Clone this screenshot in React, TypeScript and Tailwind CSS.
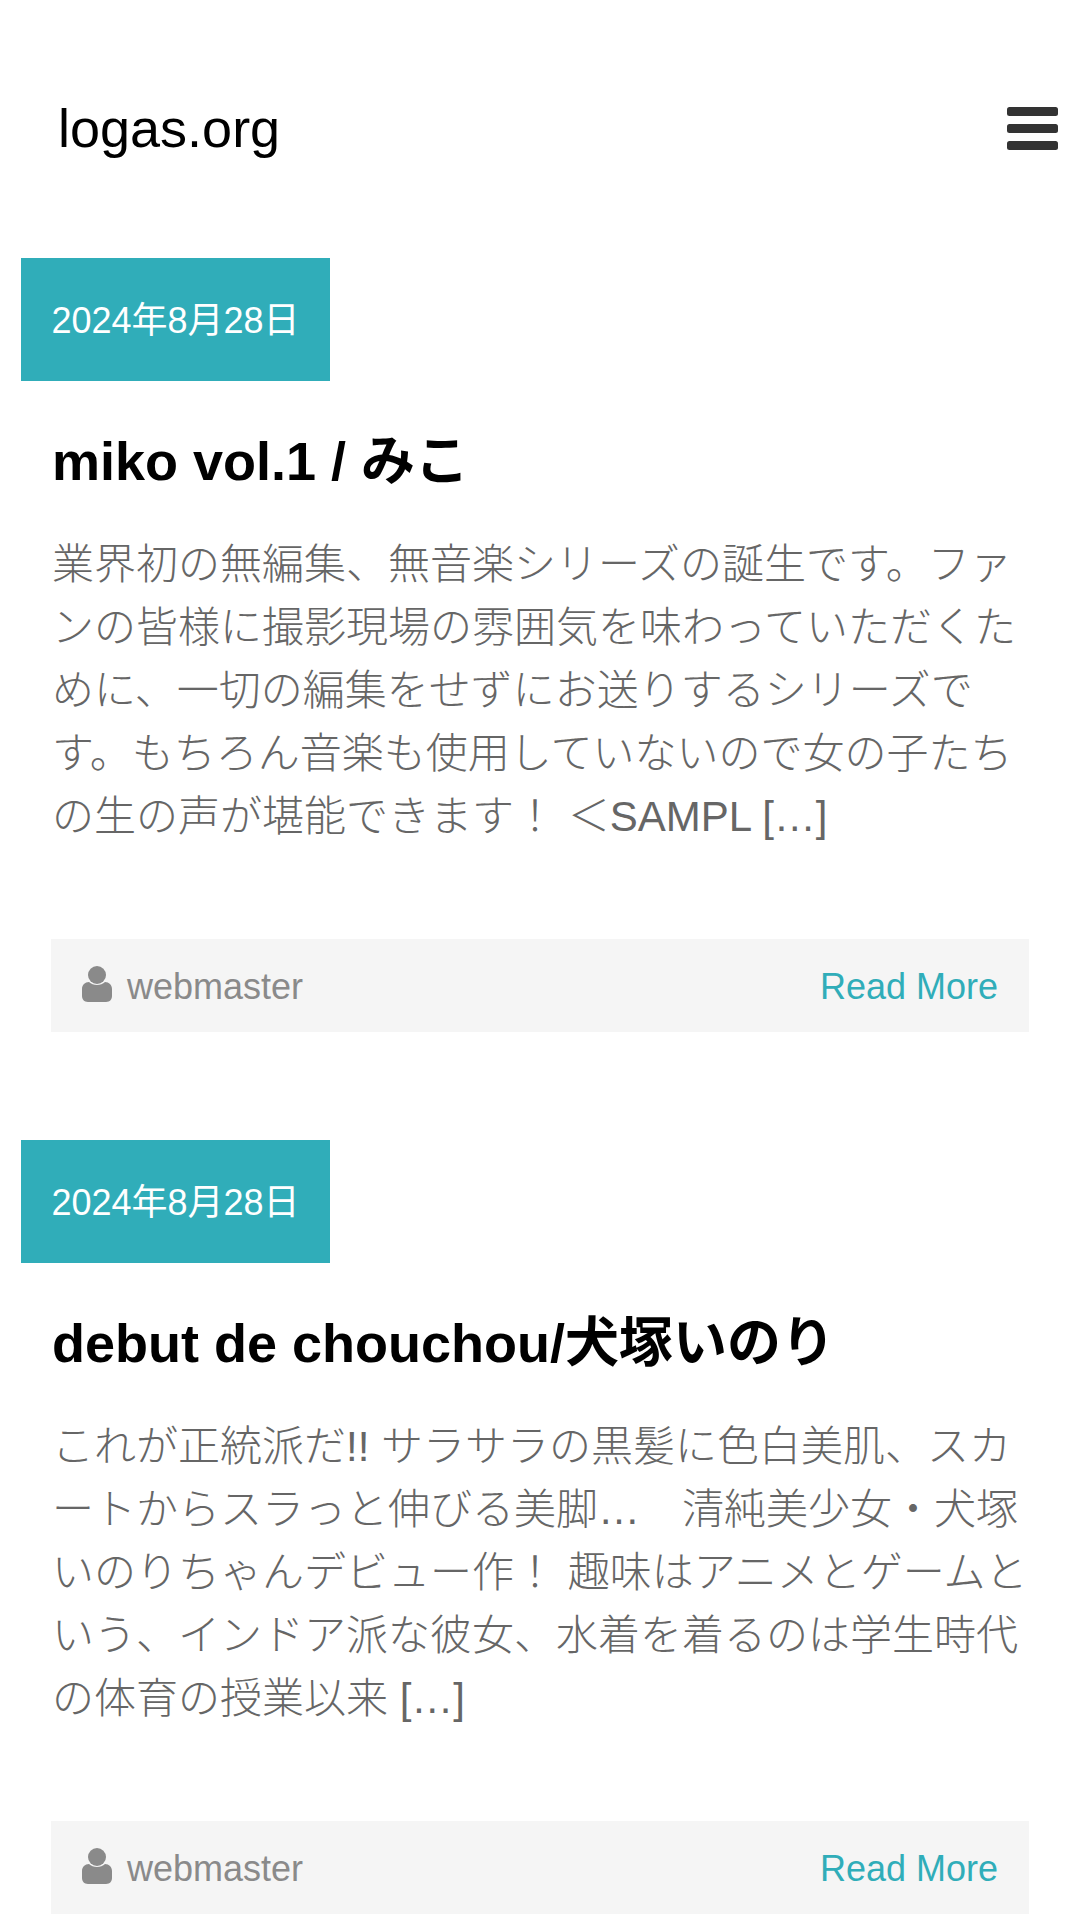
const FONT = "font-['Liberation_Sans','Noto_Sans_CJK_JP',sans-serif]";

const POSTS = [
  {
    title: 'miko vol.1 / みこ',
    excerpt:
      '業界初の無編集、無音楽シリーズの誕生です。ファンの皆様に撮影現場の雰囲気を味わっていただくために、一切の編集をせずにお送りするシリーズです。もちろん音楽も使用していないので女の子たちの生の声が堪能できます！ ＜SAMPL […]',
  },
  {
    title: 'debut de chouchou/犬塚いのり',
    excerpt:
      'これが正統派だ!! サラサラの黒髪に色白美肌、スカートからスラっと伸びる美脚…　清純美少女・犬塚いのりちゃんデビュー作！ 趣味はアニメとゲームという、インドア派な彼女、水着を着るのは学生時代の体育の授業以来 […]',
  },
];

function UserIcon() {
  return (
    <svg className="mb-[5px]" width="30" height="36" viewBox="0 0 30 36" fill="#8a8a8a">
      <circle cx="15" cy="9" r="9" />
      <path d="M0 30v-7c0-4 3-7 7-7 2 2 5 3 8 3s6-1 8-3c4 0 7 3 7 7v7c0 3-2 6-6 6H6c-4 0-6-3-6-6z" />
    </svg>
  );
}

function Post({ title, excerpt }: { title: string; excerpt: string }) {
  return (
    <article className="mb-[108px]">
      <div className="ml-[21px] w-[309px] h-[123px] pt-[2px] bg-[#30adb9] flex items-center justify-center text-white text-[36px]">
        2024年8月28日
      </div>
      <div className="mx-[51px]">
        <h2 className="mt-[45px] ml-[1px] text-[54px] leading-[70px] font-bold text-black">{title}</h2>
        <p className="mt-[37px] ml-[1px] w-[985px] text-[42px] leading-[63px] font-light text-[#666666]">{excerpt}</p>
        <div className="mt-[91px] h-[93px] pt-[2px] bg-[#f5f5f5] flex items-center justify-between px-[31px] text-[36px]">
          <div className="flex items-center gap-[15px] text-[#8a8a8a]">
            <UserIcon />
            <span>webmaster</span>
          </div>
          <a className="text-[#30adb9]">Read More</a>
        </div>
      </div>
    </article>
  );
}

export default function App() {
  return (
    <div className={`${FONT} w-[1080px] h-[1920px] overflow-hidden bg-white`}>
      <header className="h-[258px] pt-[95px] pl-[58px] pr-[22px] flex items-start justify-between">
        <span className="text-[54px] leading-[66px] text-black">logas.org</span>
        <svg className="mt-[12px]" width="51" height="43" viewBox="0 0 51 43" fill="#333333">
          <rect x="0" y="0" width="51" height="9" rx="2.5" />
          <rect x="0" y="17" width="51" height="9" rx="2.5" />
          <rect x="0" y="34" width="51" height="9" rx="2.5" />
        </svg>
      </header>
      {POSTS.map((p) => (
        <Post key={p.title} {...p} />
      ))}
    </div>
  );
}
